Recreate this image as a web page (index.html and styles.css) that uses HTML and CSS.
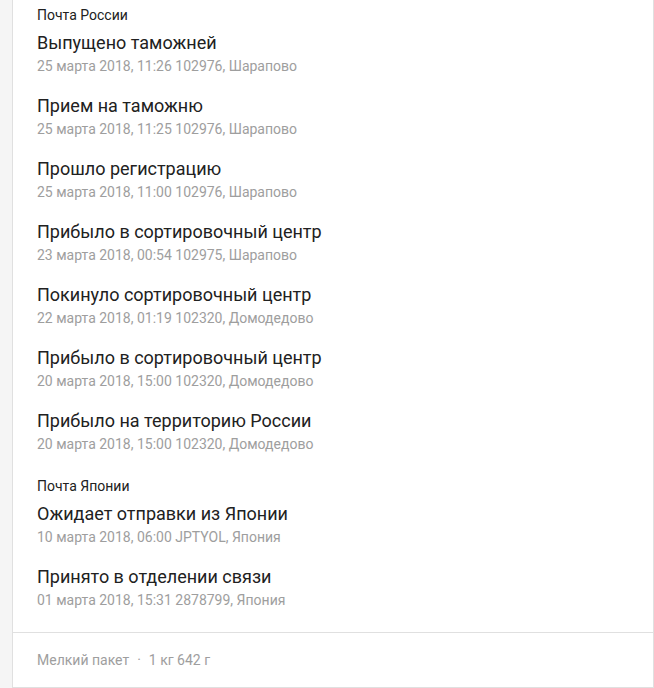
FILE: index.html
```html
<!DOCTYPE html>
<html lang="ru">

<head>
    <meta charset="UTF-8">
    <meta name="viewport" content="width=device-width, initial-scale=1.0">
    <title>Трекинг</title>
    <link rel="stylesheet" href="styles.css">
</head>

<body>
    <div class="card">
        <div class="tracking">
            <div class="section">
                <div class="section-name">Почта России</div>
                <ul class="events">
                    <li>
                        <div class="event-title">Выпущено таможней</div>
                        <div class="event-meta">25 марта 2018, 11:26 102976, Шарапово</div>
                    </li>
                    <li>
                        <div class="event-title">Прием на таможню</div>
                        <div class="event-meta">25 марта 2018, 11:25 102976, Шарапово</div>
                    </li>
                    <li>
                        <div class="event-title">Прошло регистрацию</div>
                        <div class="event-meta">25 марта 2018, 11:00 102976, Шарапово</div>
                    </li>
                    <li>
                        <div class="event-title">Прибыло в сортировочный центр</div>
                        <div class="event-meta">23 марта 2018, 00:54 102975, Шарапово</div>
                    </li>
                    <li>
                        <div class="event-title">Покинуло сортировочный центр</div>
                        <div class="event-meta">22 марта 2018, 01:19 102320, Домодедово</div>
                    </li>
                    <li>
                        <div class="event-title">Прибыло в сортировочный центр</div>
                        <div class="event-meta">20 марта 2018, 15:00 102320, Домодедово</div>
                    </li>
                    <li>
                        <div class="event-title">Прибыло на территорию России</div>
                        <div class="event-meta">20 марта 2018, 15:00 102320, Домодедово</div>
                    </li>
                </ul>
            </div>
            <div class="section">
                <div class="section-name">Почта Японии</div>
                <ul class="events">
                    <li>
                        <div class="event-title">Ожидает отправки из Японии</div>
                        <div class="event-meta">10 марта 2018, 06:00 JPTYOL, Япония</div>
                    </li>
                    <li>
                        <div class="event-title">Принято в отделении связи</div>
                        <div class="event-meta">01 марта 2018, 15:31 2878799, Япония</div>
                    </li>
                </ul>
            </div>
        </div>
        <div class="card-footer">
            <span>Мелкий пакет</span><span class="dot">·</span><span>1 кг 642 г</span>
        </div>
    </div>
</body>

</html>
```

FILE: styles.css
```css
* {
    margin: 0;
    padding: 0;
    box-sizing: border-box;
}

body {
    background: #f5f5f5;
    font-family: Roboto, "Noto Sans", "Liberation Sans", sans-serif;
    color: #212121;
}

ul,
li {
    list-style: none;
}

.card {
    margin-left: 12px;
    background: #fff;
    border: 1px solid #e0e0e0;
    border-top: none;
}

.tracking {
    display: flex;
    flex-direction: column;
    gap: 21px;
    padding: 5px 24px 21px;
}

.section-name {
    font-size: 14px;
    line-height: 20px;
    margin-bottom: 6px;
}

.events {
    display: flex;
    flex-direction: column;
    gap: 17px;
}

.event-title {
    font-size: 18px;
    line-height: 24px;
}

.event-meta {
    font-size: 14px;
    line-height: 22px;
    color: #9e9e9e;
}

.card-footer {
    border-top: 1px solid #e0e0e0;
    padding: 16px 24px 16px;
    font-size: 14px;
    line-height: 22px;
    color: #9e9e9e;
}

.card-footer .dot {
    margin: 0 8px;
}
```
